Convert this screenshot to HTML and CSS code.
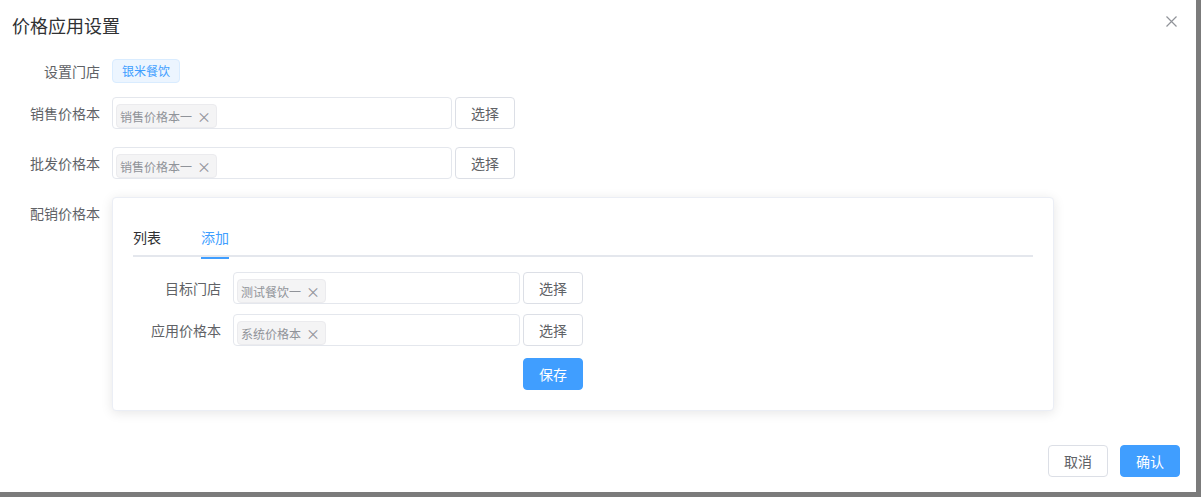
FILE: index.html
```html
<!DOCTYPE html>
<html lang="zh-CN">
<head>
<meta charset="utf-8">
<title>价格应用设置</title>
<link rel="stylesheet" href="styles.css">
</head>
<body>
<div class="dialog">
  <header class="dlg-header">
    <span class="dlg-title">价格应用设置</span>
    <button class="dlg-close" aria-label="关闭">
      <svg width="11" height="11" viewBox="0 0 11 11"><path d="M0.5 0.5L10.5 10.5M10.5 0.5L0.5 10.5" stroke="#909399" stroke-width="1.2" fill="none"/></svg>
    </button>
  </header>

  <div class="dlg-body">
    <div class="row row-store">
      <label class="lbl">设置门店</label>
      <div class="content"><span class="store-tag">银米餐饮</span></div>
    </div>

    <div class="row row-gap">
      <label class="lbl">销售价格本</label>
      <div class="content">
        <div class="select wide"><span class="tag">销售价格本一<i class="tag-x">×</i></span></div>
        <button class="btn">选择</button>
      </div>
    </div>

    <div class="row row-gap">
      <label class="lbl">批发价格本</label>
      <div class="content">
        <div class="select wide"><span class="tag">销售价格本一<i class="tag-x">×</i></span></div>
        <button class="btn">选择</button>
      </div>
    </div>

    <div class="row">
      <label class="lbl">配销价格本</label>
      <div class="content">
        <div class="card">
          <div class="tabs">
            <span class="tab">列表</span>
            <span class="tab active">添加</span>
          </div>
          <div class="irow irow-1">
            <label class="ilbl">目标门店</label>
            <div class="select narrow"><span class="tag">测试餐饮一<i class="tag-x">×</i></span></div>
            <button class="btn">选择</button>
          </div>
          <div class="irow irow-2">
            <label class="ilbl">应用价格本</label>
            <div class="select narrow"><span class="tag">系统价格本<i class="tag-x">×</i></span></div>
            <button class="btn">选择</button>
          </div>
          <div class="irow irow-save">
            <button class="btn primary">保存</button>
          </div>
        </div>
      </div>
    </div>
  </div>

  <footer class="dlg-footer">
    <button class="btn">取消</button>
    <button class="btn primary">确认</button>
  </footer>
</div>
</body>
</html>
```

FILE: styles.css
```css
* { box-sizing: border-box; }

html, body {
  margin: 0;
  padding: 0;
}

body {
  width: 1201px;
  height: 497px;
  background: #7b7b7b;
  font-family: "Noto Sans CJK SC", "Noto Sans", sans-serif;
  overflow: hidden;
}

.dialog {
  width: 1196px;
  height: 492px;
  background: #fff;
  display: flex;
  flex-direction: column;
}

.dlg-header {
  height: 55px;
  display: flex;
  align-items: center;
  justify-content: space-between;
  padding: 0 19px 6px 12px;
}

.dlg-title {
  font-size: 18px;
  color: #303133;
  line-height: 24px;
}

.dlg-close {
  border: 0;
  background: none;
  padding: 0;
  width: 11px;
  height: 11px;
  display: flex;
  margin-top: -6px;
}

.dlg-body {
  display: flex;
  flex-direction: column;
}

.row {
  display: flex;
  align-items: flex-start;
}

.row-store { margin-bottom: 10px; }
.row-gap { margin-bottom: 18px; }

.lbl {
  width: 112px;
  padding-right: 12px;
  text-align: right;
  font-size: 14px;
  color: #606266;
  line-height: 32px;
  flex: none;
}

.content {
  display: flex;
  align-items: center;
  min-height: 32px;
}

.store-tag {
  display: inline-block;
  height: 24px;
  line-height: 22px;
  padding: 0 9px;
  font-size: 12px;
  color: #409eff;
  background: #ecf5ff;
  border: 1px solid #d9ecff;
  border-radius: 4px;
}

.select {
  height: 32px;
  border: 1px solid #e4e7ed;
  border-radius: 4px;
  background: #fff;
  display: flex;
  align-items: flex-start;
  padding: 6px 0 0 3px;
  flex: none;
}

.select.wide { width: 340px; }
.select.narrow { width: 287px; }

.tag {
  display: inline-flex;
  align-items: center;
  height: 24px;
  padding: 0 4px 0 3px;
  font-size: 12px;
  color: #909399;
  background: #f4f4f5;
  border: 1px solid #ebebee;
  border-radius: 4px;
  white-space: nowrap;
}

.tag-x {
  font-style: normal;
  width: 16px;
  margin-left: 4px;
  text-align: center;
  font-size: 14px;
  color: #909399;
  line-height: 1;
}

.btn {
  height: 32px;
  width: 60px;
  padding: 0;
  margin-left: 3px;
  border: 1px solid #dcdfe6;
  border-radius: 4px;
  background: #fff;
  color: #606266;
  font-family: inherit;
  font-size: 14px;
  flex: none;
}

.btn.primary {
  background: #409eff;
  border-color: #409eff;
  color: #fff;
}

.card {
  width: 942px;
  border: 1px solid #ebeef5;
  border-radius: 4px;
  background: #fff;
  box-shadow: 0 2px 12px 0 rgba(0, 0, 0, 0.1);
  padding: 19px 20px 20px;
}

.tabs {
  position: relative;
  display: flex;
  height: 40px;
  margin-bottom: 15px;
  border-bottom: 2px solid #e4e7ed;
}

.tab {
  position: relative;
  line-height: 40px;
  height: 40px;
  padding: 0 20px;
  font-size: 14px;
  color: #303133;
}

.tab:first-child { padding-left: 0; }

.tab.active {
  color: #409eff;
}

.tab.active::after {
  content: "";
  position: absolute;
  left: 20px;
  right: 20px;
  bottom: -2px;
  height: 2px;
  background: #409eff;
}

.irow {
  display: flex;
  align-items: flex-start;
}

.irow-1 { margin-bottom: 10px; }
.irow-2 { margin-bottom: 12px; }

.irow-save {
  padding-left: 387px;
}

.ilbl {
  width: 100px;
  padding-right: 12px;
  text-align: right;
  font-size: 14px;
  color: #606266;
  line-height: 32px;
  flex: none;
}

.dlg-footer {
  margin-top: auto;
  display: flex;
  justify-content: flex-end;
  gap: 9px;
  padding: 0 16px 15px 0;
}
```
